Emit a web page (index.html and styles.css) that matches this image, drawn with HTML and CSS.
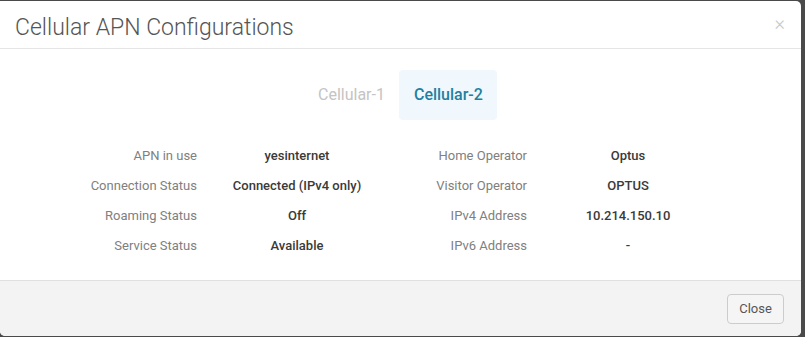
FILE: index.html
```html
<!DOCTYPE html>
<html lang="en">
<head>
    <meta charset="UTF-8">
    <title>Cellular APN Configurations</title>
    <link rel="stylesheet" href="styles.css">
</head>
<body>
    <div class="modal">
        <div class="modal-header">
            <h4 class="modal-title">Cellular APN Configurations</h4>
            <span class="close">&times;</span>
        </div>
        <div class="modal-body">
            <ul class="tabs">
                <li class="tab">Cellular-1</li>
                <li class="tab active">Cellular-2</li>
            </ul>
            <div class="info">
                <div class="label">APN in use</div>
                <div class="value">yesinternet</div>
                <div class="label">Home Operator</div>
                <div class="value">Optus</div>

                <div class="label">Connection Status</div>
                <div class="value">Connected (IPv4 only)</div>
                <div class="label">Visitor Operator</div>
                <div class="value">OPTUS</div>

                <div class="label">Roaming Status</div>
                <div class="value">Off</div>
                <div class="label">IPv4 Address</div>
                <div class="value">10.214.150.10</div>

                <div class="label">Service Status</div>
                <div class="value">Available</div>
                <div class="label">IPv6 Address</div>
                <div class="value">-</div>
            </div>
        </div>
        <div class="modal-footer">
            <button class="btn">Close</button>
        </div>
    </div>
</body>
</html>
```

FILE: styles.css
```css
html, body {
    margin: 0;
    height: 100%;
}

body {
    background: #4a4a4a;
    font-family: Roboto, "Liberation Sans", sans-serif;
    padding: 1px 4px 0 0;
    box-sizing: border-box;
}

.modal {
    background: #fff;
    width: 801px;
    height: 335px;
    border-radius: 0 5px 5px 5px;
    display: flex;
    flex-direction: column;
    overflow: hidden;
}

.modal-header {
    display: flex;
    justify-content: space-between;
    align-items: flex-start;
    height: 47px;
    padding: 0 16px 0 15px;
    border-bottom: 1px solid #e5e5e5;
}

.modal-title {
    margin: 0;
    padding-top: 13px;
    font-size: 23px;
    font-weight: 300;
    color: #555;
}

.close {
    padding-top: 12px;
    font-size: 20px;
    color: #c8c8c8;
    line-height: 1;
    font-weight: 300;
}

.modal-body {
    flex: 1;
    padding-top: 21px;
}

.tabs {
    list-style: none;
    margin: 0;
    padding: 0 0 0 303px;
    display: flex;
}

.tab {
    font-size: 16px;
    color: #c4c4c4;
    padding: 0 14px 0 15px;
    height: 50px;
    line-height: 50px;
    border-radius: 4px;
}

.tab.active {
    background: #f0f7fd;
    color: #22809f;
    font-weight: 500;
}

.info {
    display: grid;
    grid-template-columns: 197px 200px 130px 202px;
    grid-auto-rows: 30px;
    align-items: center;
    margin-top: 20px;
    font-size: 13px;
}

.label {
    text-align: right;
    color: #808080;
}

.value {
    text-align: center;
    color: #3a3a3a;
    font-weight: 500;
}

.modal-footer {
    height: 55px;
    background: #f3f3f3;
    border-top: 1px solid #e0e0e0;
    display: flex;
    justify-content: flex-end;
    align-items: center;
    padding-right: 17px;
}

.btn {
    font-family: Roboto, "Liberation Sans", sans-serif;
    font-size: 13px;
    color: #555;
    background: #f5f5f5;
    border: 1px solid #ccc;
    border-radius: 4px;
    width: 57px;
    height: 30px;
    padding: 0;
}
```
